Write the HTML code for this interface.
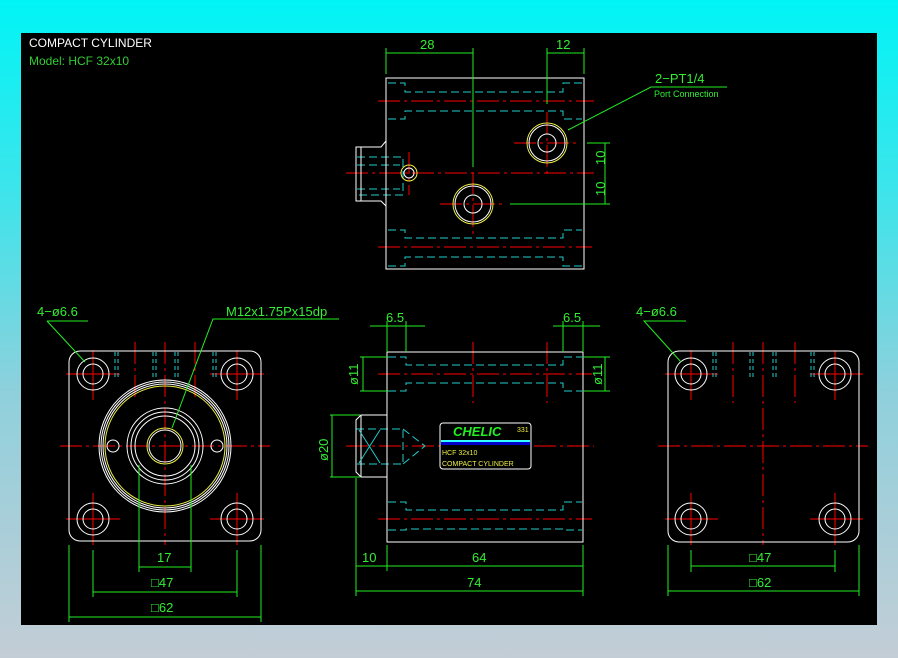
<!DOCTYPE html>
<html><head><meta charset="utf-8"><style>
html,body{margin:0;padding:0;width:898px;height:658px;overflow:hidden;background:linear-gradient(#00f4f6 0%,#3fe4ea 30%,#8fd0dc 60%,#c3cdd6 100%);}
svg{position:absolute;left:0;top:0}
text{font-family:"Liberation Sans",sans-serif}
</style></head><body>
<svg width="898" height="658" viewBox="0 0 898 658">
<defs>
<marker id="a" markerWidth="8" markerHeight="4" refX="0" refY="2" orient="auto"><rect width="8" height="3" y="0.5" fill="#2f2"/></marker>
</defs>
<rect x="21" y="33" width="856" height="592" fill="#000"/>
<text x="29" y="47" fill="#fff" font-size="12">COMPACT CYLINDER</text>
<text x="29" y="65" fill="#3c3" font-size="12">Model:  HCF  32x10</text>

<g fill="none" stroke-width="1">
<!-- TOP VIEW -->
<g stroke="#f00" stroke-dasharray="22 4 3 4">
<line x1="378" y1="101" x2="594" y2="101"/><line x1="378" y1="247" x2="592" y2="247"/>
<line x1="346" y1="173" x2="594" y2="173"/>
<line x1="514" y1="143" x2="580" y2="143"/><line x1="547" y1="112" x2="547" y2="176"/>
<line x1="440" y1="204" x2="506" y2="204"/><line x1="473" y1="172" x2="473" y2="236"/>
<line x1="409" y1="152" x2="409" y2="195"/>
</g>
<g stroke="#2cc" stroke-dasharray="8 4">
<path d="M388 83H405V92H563V83H582"/><path d="M388 119H405V111H563V119H582"/>
<path d="M388 230H405V238H563V230H582"/><path d="M388 266H405V257H563V266H582"/>
<path d="M357 157H403V195H357M357 189H400M357 165H400"/>
</g>
<rect x="386" y="78" width="198" height="191" stroke="#fff"/>
<path d="M386 141L381 147H356V201H381L386 206M361 147V201" stroke="#fff"/>
<circle cx="547" cy="143" r="20" stroke="#ee4"/><circle cx="547" cy="143" r="18" stroke="#fff"/><circle cx="547" cy="143" r="9" stroke="#fff"/>
<circle cx="473" cy="204" r="20" stroke="#ee4"/><circle cx="473" cy="204" r="18" stroke="#fff"/><circle cx="473" cy="204" r="9" stroke="#fff"/>
<circle cx="409" cy="173" r="8" stroke="#ee4"/><circle cx="409" cy="173" r="5" stroke="#fff"/>
<g stroke="#2e2">
<line x1="386" y1="48" x2="386" y2="74"/><line x1="473" y1="48" x2="473" y2="167"/>
<line x1="386" y1="53" x2="473" y2="53"/>
<line x1="547" y1="48" x2="547" y2="104"/><line x1="584" y1="48" x2="584" y2="74"/>
<line x1="547" y1="53" x2="584" y2="53"/>
<line x1="587" y1="143" x2="610" y2="143"/><line x1="510" y1="204" x2="610" y2="204"/>
<line x1="605" y1="143" x2="605" y2="204"/>
<path d="M568 130L651 87H727"/>
</g>
<!-- LEFT VIEW -->
<g stroke="#f00" stroke-dasharray="22 4 3 4">
<line x1="60" y1="446" x2="270" y2="446"/><line x1="165" y1="342" x2="165" y2="545"/>
<line x1="135" y1="342" x2="135" y2="400"/><line x1="195" y1="342" x2="195" y2="400"/>
</g>
<g stroke="#f00">
<path d="M66 374H120M93 350V400M210 374H264M237 350V400M66 519H120M93 493V545M210 519H264M237 493V545"/>
</g>
<rect x="69" y="351" width="192" height="190" rx="11" stroke="#fff"/>
<g stroke="#fff">
<circle cx="93" cy="374" r="16"/><circle cx="93" cy="374" r="10"/>
<circle cx="237" cy="374" r="16"/><circle cx="237" cy="374" r="10"/>
<circle cx="93" cy="519" r="16"/><circle cx="93" cy="519" r="10"/>
<circle cx="237" cy="519" r="16"/><circle cx="237" cy="519" r="10"/>
<circle cx="165" cy="446" r="66"/><circle cx="165" cy="446" r="64"/><circle cx="165" cy="446" r="62"/>
<circle cx="165" cy="446" r="38"/><circle cx="165" cy="446" r="34"/><circle cx="165" cy="446" r="30"/><circle cx="165" cy="446" r="16"/>
<circle cx="113" cy="446" r="6"/><circle cx="217" cy="446" r="6"/>
</g>
<circle cx="165" cy="446" r="60" stroke="#ee4"/><circle cx="165" cy="446" r="18" stroke="#ee4"/>
<g stroke="#2cc" stroke-dasharray="4 3"><path d="M115 352V378M118 352V378M153 352V378M156 352V378M175 352V378M178 352V378M213 352V378M216 352V378"/></g>
<g stroke="#2e2">
<line x1="139" y1="465" x2="139" y2="572"/><line x1="191" y1="465" x2="191" y2="572"/><line x1="139" y1="567" x2="191" y2="567"/>
<line x1="93" y1="550" x2="93" y2="597"/><line x1="237" y1="550" x2="237" y2="597"/><line x1="93" y1="592" x2="237" y2="592"/>
<line x1="69" y1="545" x2="69" y2="622"/><line x1="261" y1="545" x2="261" y2="622"/><line x1="69" y1="617" x2="261" y2="617"/>
<path d="M88 321H47M47 321L85 362"/><path d="M339 319H213L172 428"/>
</g>
<!-- FRONT VIEW -->
<g stroke="#f00" stroke-dasharray="22 4 3 4">
<line x1="378" y1="374" x2="592" y2="374"/><line x1="378" y1="519" x2="592" y2="519"/>
<line x1="346" y1="446" x2="440" y2="446"/><line x1="534" y1="446" x2="594" y2="446"/>
<line x1="473" y1="342" x2="473" y2="403"/><line x1="547" y1="342" x2="547" y2="403"/>
</g>
<g stroke="#2cc" stroke-dasharray="8 4">
<path d="M388 357H406V365H563V357H582"/><path d="M388 391H406V383H563V391H582"/>
<path d="M388 502H406V510H563V502H582"/><path d="M388 530H406V529H563V530H582"/>
<path d="M356 429H403V464H356M403 429L425 446L403 464"/>
</g>
<rect x="387" y="352" width="196" height="190" stroke="#fff"/>
<path d="M387 415H361L356 420V472L361 477H387M361 415V477" stroke="#fff"/>
<path d="M359 430L380 463M380 430L359 463" stroke="#2cc"/>
<rect x="440" y="423" width="91" height="46" rx="3" stroke="#fff"/>
<g stroke="#2e2">
<line x1="387" y1="321" x2="387" y2="352"/><line x1="406" y1="321" x2="406" y2="352"/><line x1="370" y1="326" x2="425" y2="326"/>
<line x1="563" y1="321" x2="563" y2="352"/><line x1="583" y1="321" x2="583" y2="352"/><line x1="553" y1="326" x2="600" y2="326"/>
<line x1="360" y1="357" x2="388" y2="357"/><line x1="360" y1="391" x2="388" y2="391"/><line x1="363" y1="357" x2="363" y2="391"/>
<line x1="583" y1="357" x2="610" y2="357"/><line x1="583" y1="391" x2="610" y2="391"/><line x1="605" y1="357" x2="605" y2="391"/>
<line x1="330" y1="415" x2="360" y2="415"/><line x1="330" y1="477" x2="360" y2="477"/><line x1="332" y1="415" x2="332" y2="477"/>
<line x1="356" y1="478" x2="356" y2="596"/><line x1="387" y1="545" x2="387" y2="571"/><line x1="583" y1="545" x2="583" y2="596"/>
<line x1="356" y1="566" x2="583" y2="566"/><line x1="356" y1="591" x2="583" y2="591"/>
</g>
<!-- RIGHT VIEW -->
<g stroke="#f00" stroke-dasharray="22 4 3 4">
<line x1="658" y1="446" x2="868" y2="446"/><line x1="763" y1="342" x2="763" y2="545"/>
<line x1="733" y1="342" x2="733" y2="403"/><line x1="795" y1="342" x2="795" y2="403"/>
</g>
<g stroke="#f00">
<path d="M665 374H718M691 350V400M810 374H863M835 350V400M665 519H718M691 493V545M810 519H863M835 493V545"/>
</g>
<rect x="668" y="351" width="191" height="191" rx="11" stroke="#fff"/>
<g stroke="#fff">
<circle cx="691" cy="374" r="16"/><circle cx="691" cy="374" r="10"/>
<circle cx="835" cy="374" r="16"/><circle cx="835" cy="374" r="10"/>
<circle cx="691" cy="519" r="16"/><circle cx="691" cy="519" r="10"/>
<circle cx="835" cy="519" r="16"/><circle cx="835" cy="519" r="10"/>
</g>
<g stroke="#2cc" stroke-dasharray="4 3"><path d="M713 352V378M716 352V378M750 352V378M753 352V378M773 352V378M776 352V378M811 352V378M814 352V378"/></g>
<g stroke="#2e2">
<line x1="691" y1="550" x2="691" y2="572"/><line x1="835" y1="550" x2="835" y2="572"/><line x1="691" y1="566" x2="835" y2="566"/>
<line x1="668" y1="545" x2="668" y2="596"/><line x1="859" y1="545" x2="859" y2="596"/><line x1="668" y1="591" x2="859" y2="591"/>
<path d="M686 321H644L681 362"/>
</g>
</g>
<rect x="441" y="440" width="89" height="2" fill="#3ff"/><rect x="441" y="442" width="89" height="3" fill="#00c"/>
<g fill="#3e3" font-size="13">
<text x="420" y="49">28</text><text x="556" y="49">12</text>
<text x="655" y="83">2−PT1/4</text>
<text x="654" y="97" font-size="9">Port Connection</text>
<text transform="translate(605,165) rotate(-90)">10</text>
<text transform="translate(605,196) rotate(-90)">10</text>
<text x="37" y="316">4−ø6.6</text><text x="226" y="316">M12x1.75Px15dp</text>
<text x="157" y="562">17</text><text x="151" y="587">□47</text><text x="151" y="612">□62</text>
<text x="386" y="322">6.5</text><text x="563" y="322">6.5</text>
<text transform="translate(358,385) rotate(-90)">ø11</text>
<text transform="translate(602,385) rotate(-90)">ø11</text>
<text transform="translate(328,461) rotate(-90)">ø20</text>
<text x="362" y="562">10</text><text x="472" y="562">64</text><text x="467" y="587">74</text>
<text x="636" y="316">4−ø6.6</text>
<text x="749" y="562">□47</text><text x="749" y="587">□62</text>
<text x="453" y="436" font-size="13" font-weight="bold" font-style="italic" fill="#2e2">CHELIC</text>
</g>
<g fill="#ee4" font-size="7"><text x="517" y="432">331</text><text x="442" y="455">HCF 32x10</text><text x="442" y="466">COMPACT CYLINDER</text></g>
</svg>
</body></html>
